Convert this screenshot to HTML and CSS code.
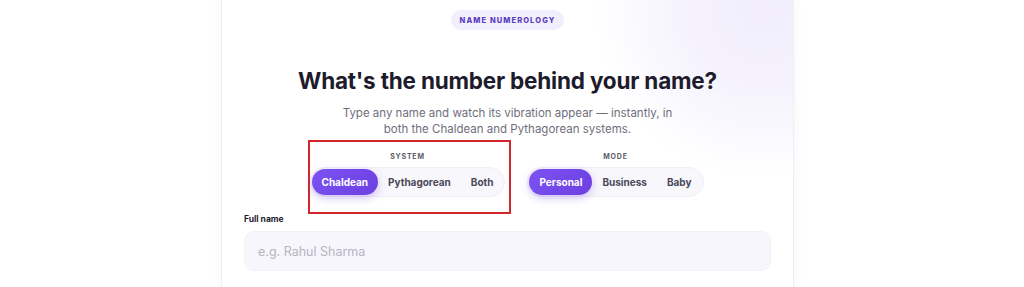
FILE: index.html
```html
<!DOCTYPE html>
<html lang="en">
  <head>
    <meta charset="UTF-8" />
    <meta name="viewport" content="width=device-width, initial-scale=1.0" />
    <title>Name Numerology</title>
    <link rel="stylesheet" href="styles.css">
  </head>
  <body>
    <main class="card">
      <div class="badge">Name Numerology</div>

      <h1 class="title">What's the number behind your name?</h1>
      <p class="subtitle">
        Type any name and watch its vibration appear — instantly, in<br />
        both the Chaldean and Pythagorean systems.
      </p>

      <div class="options">
        <div class="option-group highlighted">
          <div class="option-label">System</div>
          <div class="segmented">
            <button class="seg active">Chaldean</button>
            <button class="seg">Pythagorean</button>
            <button class="seg">Both</button>
          </div>
        </div>

        <div class="option-group">
          <div class="option-label">Mode</div>
          <div class="segmented">
            <button class="seg active">Personal</button>
            <button class="seg">Business</button>
            <button class="seg">Baby</button>
          </div>
        </div>
      </div>

      <label class="field-label" for="name">Full name</label>
      <input id="name" class="name-input" type="text" placeholder="e.g. Rahul Sharma" />
    </main>
  </body>
</html>
```

FILE: styles.css
```css
:root {
  --purple: #6b3fe0;
  --purple-light: #7d52f2;
  --badge-bg: #f2eefd;
  --badge-text: #5a3dbd;
  --dark: #1d1b2c;
  --gray: #6f6e7c;
  --muted: #b6b4c3;
  --field-bg: #f7f6fc;
  --annotation: #d3262b;
}

* {
  margin: 0;
  padding: 0;
  box-sizing: border-box;
  font-family: "Inter", "Open Sans", sans-serif;
}

body {
  background: #ffffff;
  height: 287px;
  overflow: hidden;
}

.card {
  width: 573px;
  min-height: 300px;
  margin-left: 221px;
  padding: 10px 22px 0;
  background: radial-gradient(circle at 95% 3%, #f1edfc 0, rgba(241, 237, 252, 0.7) 80px, transparent 170px), #ffffff;
  border: 1px solid #efeef4;
  border-top: none;
  box-shadow: 0 0 12px rgba(60, 50, 120, 0.04);
  display: flex;
  flex-direction: column;
  align-items: center;
}

.badge {
  height: 20px;
  padding: 0 9px;
  display: flex;
  align-items: center;
  border-radius: 10px;
  background: var(--badge-bg);
  color: var(--badge-text);
  font-size: 7.5px;
  font-weight: 800;
  letter-spacing: 1.1px;
  text-transform: uppercase;
}

.title {
  margin-top: 37px;
  font-size: 22.5px;
  font-weight: 700;
  letter-spacing: -0.2px;
  color: var(--dark);
  line-height: 28px;
}

.subtitle {
  margin-top: 10px;
  font-size: 11.5px;
  line-height: 16px;
  color: var(--gray);
  text-align: center;
}

.options {
  margin-top: 3px;
  display: flex;
  gap: 14px;
}

.option-group {
  display: flex;
  flex-direction: column;
  align-items: center;
  gap: 6px;
  padding: 10px 2px 15px 0;
  border: 2px solid transparent;
}

.option-group.highlighted {
  border-color: var(--annotation);
  padding-right: 4px;
}

.option-label {
  font-size: 7px;
  font-weight: 700;
  letter-spacing: 0.8px;
  color: #5c5b68;
  text-transform: uppercase;
}

.segmented {
  display: flex;
  padding: 1px;
  border-radius: 15px;
  background: #f8f7fc;
  border: 1px solid #f0eff6;
}

.seg {
  height: 26px;
  padding: 0 10px;
  border: none;
  border-radius: 13px;
  background: transparent;
  font-size: 10px;
  font-weight: 700;
  color: #4a4958;
  cursor: pointer;
}

.seg.active {
  background: linear-gradient(135deg, var(--purple-light), var(--purple));
  color: #ffffff;
  box-shadow: 0 3px 8px rgba(107, 63, 224, 0.3);
}

.field-label {
  align-self: flex-start;
  margin-top: 0;
  font-size: 8.5px;
  font-weight: 700;
  color: var(--dark);
}

.name-input {
  width: 100%;
  height: 40px;
  margin-top: 7px;
  padding: 0 13px;
  border: 1px solid #f2f1f7;
  border-radius: 10px;
  background: var(--field-bg);
  font-size: 12.5px;
  color: var(--dark);
  outline: none;
}

.name-input::placeholder {
  color: var(--muted);
}
```
